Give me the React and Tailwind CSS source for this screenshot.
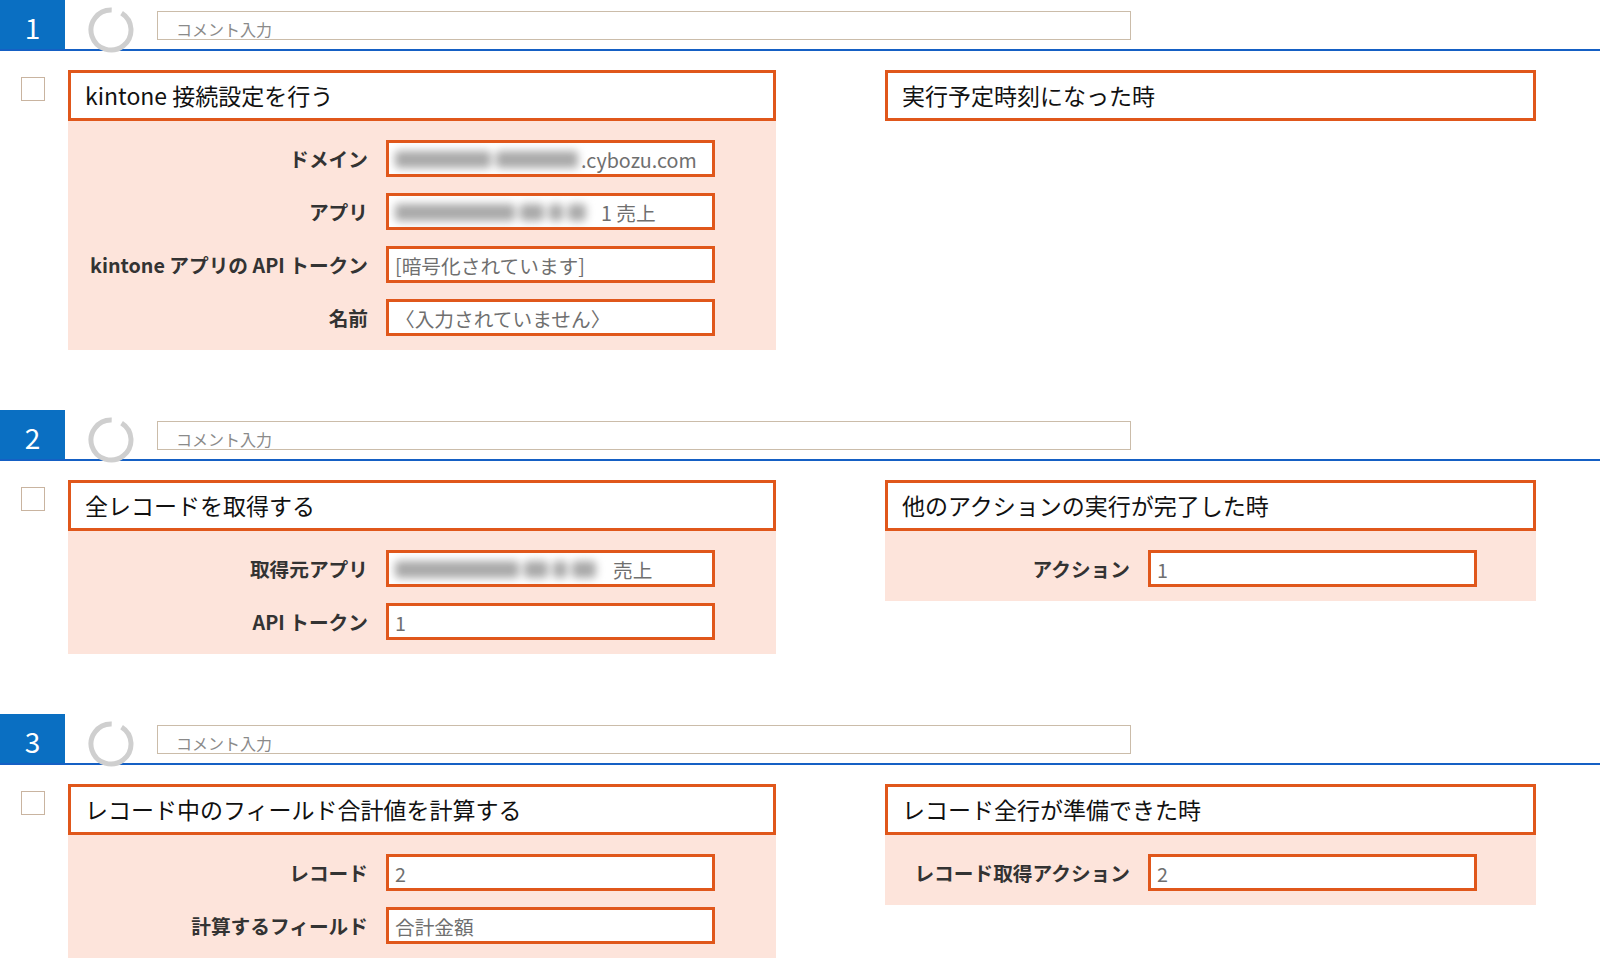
import React from "react";

const FONT = { fontFamily: '"Noto Sans CJK JP", "Noto Sans", sans-serif' };

function Spinner() {
  const r = 20;
  const cx = 23;
  const cy = 23;
  const a1 = (-88 * Math.PI) / 180;
  const a2 = (-58 * Math.PI) / 180;
  const x1 = cx + r * Math.cos(a2);
  const y1 = cy + r * Math.sin(a2);
  const x2 = cx + r * Math.cos(a1);
  const y2 = cy + r * Math.sin(a1);
  const d = `M ${x1} ${y1} A ${r} ${r} 0 1 1 ${x2} ${y2}`;
  return (
    <svg width="46" height="46" viewBox="0 0 46 46" className="shrink-0 mt-[7px] ml-[23px] relative">
      <path d={d} fill="none" stroke="#cfcfcf" strokeWidth="5" />
    </svg>
  );
}

function Header({ n }) {
  return (
    <div className="flex h-[51px] border-b-2 border-[#1560c4]">
      <div className="w-[65px] h-[49px] bg-[#0a6fc2] text-white text-[28px] leading-none flex items-center justify-center pt-[4px] shrink-0">
        {n}
      </div>
      <Spinner />
      <div className="ml-[23px] mt-[11px] w-[974px] h-[29px] border-[1.5px] border-[#cbbca9] bg-white flex items-end pl-[18px]">
        <span className="text-[16px] leading-[19px] text-[#8a8a8a]">コメント入力</span>
      </div>
    </div>
  );
}

// redacted (blurred) text drawn as soft gray blobs
function Smudge({ w, parts }) {
  return (
    <span
      style={{ width: w }}
      className="inline-flex items-center h-[20px] gap-[5px] blur-[4px] shrink-0 overflow-visible"
    >
      {parts.map((p, i) => (
        <span
          key={i}
          style={{ width: p }}
          className="inline-block h-[17px] rounded-[4px] bg-[#a9a9a9] shrink-0"
        />
      ))}
    </span>
  );
}

function Field({ label, labelW, gap, children }) {
  return (
    <div className="flex items-center h-[37px]">
      <div
        className="text-right text-[19.7px] font-bold text-[#333] whitespace-nowrap shrink-0 leading-none"
        style={{ width: labelW, marginRight: gap }}
      >
        {label}
      </div>
      <div className="w-[329px] h-[37px] border-[3px] border-[#e0571b] bg-white flex items-center pl-[6px] pt-[2px] overflow-hidden text-[19.7px] text-[#6f6f6f] whitespace-nowrap">
        {children}
      </div>
    </div>
  );
}

function Card({ title, width, labelW, gap, fields }) {
  return (
    <div style={{ width }} className="shrink-0">
      <div className="h-[51px] border-[3px] border-[#e0571b] bg-white flex items-center pl-[14px] text-[23px] text-[#111] whitespace-nowrap">
        {title}
      </div>
      {fields && (
        <div className="bg-[#fde4db] pt-[19px] pb-[14px] flex flex-col gap-[16px]">
          {fields.map((f, i) => (
            <Field key={i} label={f.label} labelW={labelW} gap={gap}>
              {f.value}
            </Field>
          ))}
        </div>
      )}
    </div>
  );
}

function Section({ n, left, right, first }) {
  return (
    <div className={first ? "" : "mt-[60px]"}>
      <Header n={n} />
      <div className="flex mt-[19px]">
        <div className="ml-[21px] mt-[7px] w-[24px] h-[24px] border border-[#c9b4a0] bg-white shrink-0" />
        <div className="ml-[23px]">
          <Card width={708} labelW={300} gap={18} {...left} />
        </div>
        <div className="ml-[109px]">
          <Card width={651} labelW={245} gap={18} {...right} />
        </div>
      </div>
    </div>
  );
}

export default function App() {
  return (
    <div style={FONT} className="w-[1600px] h-[963px] bg-white overflow-hidden">
      <Section
        first
        n="1"
        left={{
          title: "kintone 接続設定を行う",
          fields: [
            {
              label: "ドメイン",
              value: (
                <>
                  <Smudge w={186} parts={[96, 82]} />
                  <span>.cybozu.com</span>
                </>
              ),
            },
            {
              label: "アプリ",
              value: (
                <>
                  <Smudge w={202} parts={[120, 24, 14, 18]} />
                  <span className="ml-[4px]">1 売上</span>
                </>
              ),
            },
            { label: "kintone アプリの API トークン", value: "[暗号化されています]" },
            { label: "名前", value: "〈入力されていません〉" },
          ],
        }}
        right={{ title: "実行予定時刻になった時" }}
      />
      <Section
        n="2"
        left={{
          title: "全レコードを取得する",
          fields: [
            {
              label: "取得元アプリ",
              value: (
                <>
                  <Smudge w={212} parts={[124, 24, 14, 24]} />
                  <span className="ml-[6px]">売上</span>
                </>
              ),
            },
            { label: "API トークン", value: "1" },
          ],
        }}
        right={{
          title: "他のアクションの実行が完了した時",
          fields: [{ label: "アクション", value: "1" }],
        }}
      />
      <Section
        n="3"
        left={{
          title: "レコード中のフィールド合計値を計算する",
          fields: [
            { label: "レコード", value: "2" },
            { label: "計算するフィールド", value: "合計金額" },
          ],
        }}
        right={{
          title: "レコード全行が準備できた時",
          fields: [{ label: "レコード取得アクション", value: "2" }],
        }}
      />
    </div>
  );
}
